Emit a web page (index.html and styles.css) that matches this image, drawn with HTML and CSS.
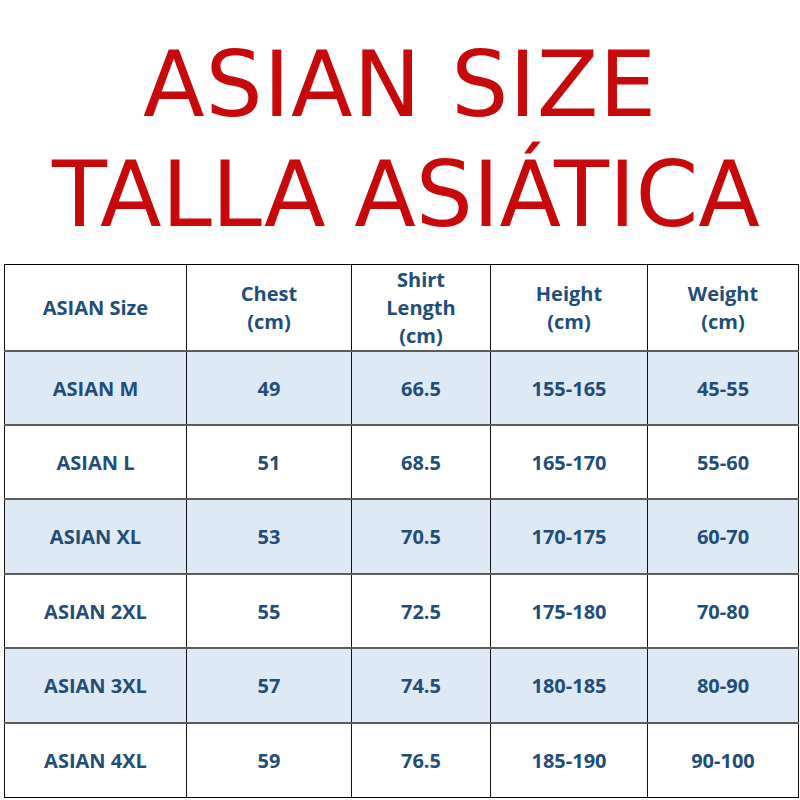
FILE: index.html
```html
<!DOCTYPE html>
<html>
<head>
<meta charset="utf-8">
<link rel="stylesheet" href="styles.css">
</head>
<body>
<div class="page">
  <h1 class="title"><span class="line1">ASIAN SIZE</span><span class="line2">TALLA ASIÁTICA</span></h1>
  <table class="sizes">
    <colgroup>
      <col class="c1"><col class="c2"><col class="c3"><col class="c4"><col class="c5">
    </colgroup>
    <thead>
      <tr class="head">
        <th>ASIAN Size</th>
        <th>Chest<br>(cm)</th>
        <th>Shirt<br>Length<br>(cm)</th>
        <th>Height<br>(cm)</th>
        <th>Weight<br>(cm)</th>
      </tr>
    </thead>
    <tbody>
      <tr class="alt r74"><td>ASIAN M</td><td>49</td><td>66.5</td><td>155-165</td><td>45-55</td></tr>
      <tr class="r74"><td>ASIAN L</td><td>51</td><td>68.5</td><td>165-170</td><td>55-60</td></tr>
      <tr class="alt r75"><td>ASIAN XL</td><td>53</td><td>70.5</td><td>170-175</td><td>60-70</td></tr>
      <tr class="r74"><td>ASIAN 2XL</td><td>55</td><td>72.5</td><td>175-180</td><td>70-80</td></tr>
      <tr class="alt r75"><td>ASIAN 3XL</td><td>57</td><td>74.5</td><td>180-185</td><td>80-90</td></tr>
      <tr class="r75"><td>ASIAN 4XL</td><td>59</td><td>76.5</td><td>185-190</td><td>90-100</td></tr>
    </tbody>
  </table>
  <span class="mark"></span>
</div>
</body>
</html>
```
FILE: styles.css
```css
html, body {
  margin: 0;
  padding: 0;
  background: #ffffff;
}
.page {
  position: relative;
  width: 800px;
  height: 800px;
  overflow: hidden;
}
.title {
  margin: 0;
  padding-top: 30px;
  font-family: "DejaVu Sans", sans-serif;
  font-weight: normal;
  font-size: 90px;
  line-height: 110px;
  color: #c8090b;
  text-align: center;
  display: flex;
  flex-direction: column;
  align-items: center;
}
.title span {
  display: block;
  white-space: nowrap;
}
.line1 {
  letter-spacing: 0.9px;
}
.line2 {
  padding-left: 12px;
}
.sizes {
  margin: 14px 0 0 4px;
  width: 794px;
  table-layout: fixed;
  border-collapse: collapse;
  font-family: "Open Sans", sans-serif;
  font-weight: bold;
  font-size: 20px;
  color: #1f4e79;
  text-align: center;
  border: 1px solid #000;
}
.c1 { width: 182px; }
.c2 { width: 165px; }
.c3 { width: 139px; }
.c4 { width: 157px; }
.c5 { width: 151px; }
.sizes th, .sizes td {
  padding: 0;
  border-left: 1px solid #111;
  border-right: 1px solid #111;
  border-bottom: 2px solid #5c5c5c;
  vertical-align: middle;
  font-weight: bold;
}
.sizes tbody tr:last-child td {
  border-bottom: 1px solid #000;
}
.head th {
  height: 85px;
  line-height: 28px;
}
.r74 td { height: 72px; }
.r75 td { height: 73px; }
.alt td { background: #dde9f5; }
.mark {
  position: absolute;
  left: 798px;
  top: 427px;
  width: 1px;
  height: 14px;
  background: #000;
}
```
